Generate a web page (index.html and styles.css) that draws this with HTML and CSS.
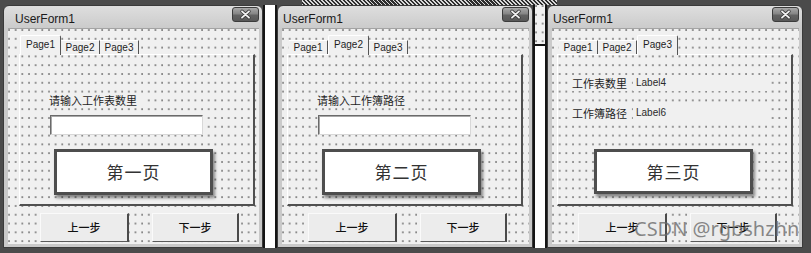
FILE: index.html
```html
<!DOCTYPE html>
<html lang="zh">
<head>
<meta charset="utf-8">
<title>UserForm1</title>
<link rel="stylesheet" href="styles.css">
</head>
<body>
<div class="screen">
  <div class="top-strip"><div class="hatch"></div></div>
  <div class="row">
    <div class="win win-1">
      <div class="titlebar">
        <span class="title">UserForm1</span>
        <span class="close"><svg width="27" height="15" viewBox="0 0 27 15"><path d="M10 4.3l7 6.4M17 4.3l-7 6.4" stroke="#3a3a3a" stroke-width="3.4" stroke-linecap="round"/><path d="M10 4.3l7 6.4M17 4.3l-7 6.4" stroke="#f2f2f2" stroke-width="1.8" stroke-linecap="round"/></svg></span>
      </div>
      <div class="client">
        <div class="tabs">
          <div class="tab active">Page1</div>
          <div class="tab">Page2</div>
          <div class="tab">Page3</div>
        </div>
        <div class="panel">
          <div class="label-cn">请输入工作表数里</div>
          <div class="textbox"></div>
          <div class="bigbtn">第一页</div>
        </div>
        <div class="buttons">
          <div class="btn btn-prev">上一步</div>
          <div class="btn btn-next">下一步</div>
        </div>
      </div>
    </div>
    <div class="gap"></div>
    <div class="win win-2">
      <div class="titlebar">
        <span class="title">UserForm1</span>
        <span class="close"><svg width="27" height="15" viewBox="0 0 27 15"><path d="M10 4.3l7 6.4M17 4.3l-7 6.4" stroke="#3a3a3a" stroke-width="3.4" stroke-linecap="round"/><path d="M10 4.3l7 6.4M17 4.3l-7 6.4" stroke="#f2f2f2" stroke-width="1.8" stroke-linecap="round"/></svg></span>
      </div>
      <div class="client">
        <div class="tabs">
          <div class="tab">Page1</div>
          <div class="tab active">Page2</div>
          <div class="tab">Page3</div>
        </div>
        <div class="panel">
          <div class="label-cn">请输入工作簿路径</div>
          <div class="textbox"></div>
          <div class="bigbtn">第二页</div>
        </div>
        <div class="buttons">
          <div class="btn btn-prev">上一步</div>
          <div class="btn btn-next">下一步</div>
        </div>
      </div>
    </div>
    <div class="gap gap-2"><div class="gap-form"></div></div>
    <div class="win win-3">
      <div class="titlebar">
        <span class="title">UserForm1</span>
        <span class="close"><svg width="27" height="15" viewBox="0 0 27 15"><path d="M10 4.3l7 6.4M17 4.3l-7 6.4" stroke="#3a3a3a" stroke-width="3.4" stroke-linecap="round"/><path d="M10 4.3l7 6.4M17 4.3l-7 6.4" stroke="#f2f2f2" stroke-width="1.8" stroke-linecap="round"/></svg></span>
      </div>
      <div class="client">
        <div class="tabs">
          <div class="tab">Page1</div>
          <div class="tab">Page2</div>
          <div class="tab active">Page3</div>
        </div>
        <div class="panel panel-3">
          <div class="info-row"><span class="lbl-cn">工作表数里</span><span class="lbl-val">Label4</span></div>
          <div class="info-row"><span class="lbl-cn">工作簿路径</span><span class="lbl-val">Label6</span></div>
          <div class="bigbtn bigbtn-3">第三页</div>
        </div>
        <div class="buttons">
          <div class="btn btn-prev">上一步</div>
          <div class="btn btn-next">下一步</div>
        </div>
      </div>
    </div>
  </div>
  <div class="watermark">CSDN @rgbshzhn</div>
</div>
</body>
</html>
```

FILE: styles.css
```css
* { box-sizing: border-box; margin: 0; padding: 0; }

html, body { background: #4b4b4b; }

body {
  width: 811px;
  height: 253px;
  overflow: hidden;
  font-family: "Liberation Sans", Arial, sans-serif;
  color: #1e1e1e;
}

.screen {
  position: relative;
  width: 811px;
  height: 253px;
  background: #4b4b4b;
  display: flex;
  flex-direction: column;
}

.top-strip {
  height: 5px;
  display: flex;
}

.hatch {
  margin-left: 302px;
  width: 255px;
  height: 5px;
  background: repeating-linear-gradient(45deg, #d8d8d8 0 1.2px, #2e2e2e 1.2px 2.8px);
}

.row {
  display: flex;
  height: 243px;
  padding-left: 3px;
}

/* window frame */
.win {
  display: flex;
  flex-direction: column;
  width: 256px;
  height: 243px;
  background: linear-gradient(#dedede, #cbcbcb 22px, #c9c9c9);
  border: 1px solid #3a3a3a;
  border-radius: 6px 6px 0 0;
  padding: 0 3px 3px 4px;
}

.win-1 { width: 260px; }

.titlebar {
  height: 22px;
  display: flex;
  justify-content: space-between;
  align-items: flex-start;
}

.title {
  padding-top: 5px;
  padding-left: 1px;
  font-size: 12px;
  line-height: 16px;
  color: #1a1a1a;
}

.win-1 .title { padding-left: 7px; }

.close {
  margin-top: 1px;
  width: 27px;
  height: 15px;
  border: 1px solid #3c3c3c;
  border-radius: 3px;
  background: linear-gradient(#a8a8a8, #858585 45%, #636363 55%, #585858);
  display: flex;
  align-items: center;
  justify-content: center;
  overflow: hidden;
}

.close svg { display: block; margin: -1px; }

/* client area with design grid */
.client {
  flex: 1;
  display: flex;
  flex-direction: column;
  padding-left: 5px;
  border-top: 1px solid #a4a4a4;
  background-color: #f0f0f0;
  background-image: radial-gradient(circle at 1px 1px, #7a7a7a 0.6px, transparent 1px);
  background-size: 6.67px 8.8px;
}

.win-1 .client { padding-left: 11px; }

.tabs {
  margin-top: 6px;
  height: 19px;
  display: flex;
  align-items: flex-end;
  padding-left: 2px;
  position: relative;
  z-index: 2;
}

.win-1 .tabs { padding-left: 1px; }

.tab {
  width: 39px;
  height: 14px;
  line-height: 14px;
  font-size: 10px;
  text-align: center;
  background: #f0f0f0;
  border-top: 1px solid #ffffff;
  border-right: 1px solid #555555;
  color: #1e1e1e;
}

.tab.active {
  width: 41px;
  height: 20px;
  line-height: 18px;
  margin-bottom: -1px;
  border-left: 1px solid #ffffff;
  border-radius: 2px 2px 0 0;
}

/* multipage body */
.panel {
  width: 236px;
  height: 152px;
  border-top: 1px solid #ffffff;
  border-left: 1px solid #ffffff;
  border-right: 2px solid #505050;
  border-bottom: 2px solid #505050;
  display: flex;
  flex-direction: column;
  align-items: flex-start;
}

.label-cn {
  margin-top: 38px;
  margin-left: 26px;
  width: 100px;
  height: 14px;
  padding-left: 3px;
  background: #f0f0f0;
  font-family: "Noto Sans CJK SC", "Noto Sans", sans-serif;
  font-size: 11px;
  line-height: 14px;
  white-space: nowrap;
}

.textbox {
  margin-top: 8px;
  margin-left: 30px;
  width: 153px;
  height: 20px;
  background: #ffffff;
  border: 1px solid;
  border-color: #6a6a6a #d8d8d8 #d8d8d8 #6a6a6a;
  box-shadow: inset 1px 1px 0 #a8a8a8;
}

.bigbtn {
  margin-top: 14px;
  margin-left: 34px;
  width: 159px;
  height: 46px;
  background: #ffffff;
  border: 3px solid #4e4e4e;
  box-shadow: 2px 3px 3px rgba(0, 0, 0, 0.45);
  font-family: "Noto Sans CJK SC", "Noto Sans", sans-serif;
  font-size: 17px;
  letter-spacing: 1px;
  line-height: 40px;
  text-align: center;
  color: #333333;
}

.panel-3 .bigbtn-3 {
  margin-top: 28px;
  margin-left: 36px;
  height: 45px;
}

.info-row {
  margin-left: 11px;
  height: 16px;
  display: flex;
  gap: 5px;
  margin-top: 14px;
}

.info-row:first-child { margin-top: 20px; }

.lbl-cn {
  width: 59px;
  padding-left: 3px;
  background: #f0f0f0;
  font-family: "Noto Sans CJK SC", "Noto Sans", sans-serif;
  font-size: 11px;
  line-height: 16px;
  white-space: nowrap;
}

.lbl-val {
  width: 138px;
  padding-left: 3px;
  background: #f0f0f0;
  font-size: 10px;
  line-height: 16px;
  color: #2a2a2a;
}

/* command buttons */
.buttons {
  margin-top: 7px;
  margin-left: 21px;
  display: flex;
  gap: 23px;
}

.btn {
  height: 29px;
  background: #ececec;
  border-top: 1px solid #fafafa;
  border-left: 1px solid #fafafa;
  border-right: 2px solid #4a4a4a;
  border-bottom: 1px solid #5a5a5a;
  font-family: "Noto Sans CJK SC", "Noto Sans", sans-serif;
  font-size: 11px;
  font-weight: 500;
  line-height: 27px;
  text-align: center;
  color: #111111;
}

.btn-prev { width: 89px; }
.btn-next { width: 87px; }

/* strips between windows */
.gap {
  width: 14px;
  height: 243px;
  background: #ffffff;
  border-left: 2px solid #151515;
  border-right: 2px solid #151515;
}

.gap-form {
  height: 41px;
  border-bottom: 2px solid #111111;
  background-color: #f2f2f2;
  background-image: radial-gradient(circle at 1px 1px, #7a7a7a 0.6px, transparent 1px);
  background-size: 6.67px 8.8px;
}

.watermark {
  position: absolute;
  left: 634px;
  top: 217px;
  font-family: "Noto Sans", sans-serif;
  font-size: 20px;
  line-height: 24px;
  color: rgba(105, 105, 105, 0.78);
  white-space: nowrap;
}
```
